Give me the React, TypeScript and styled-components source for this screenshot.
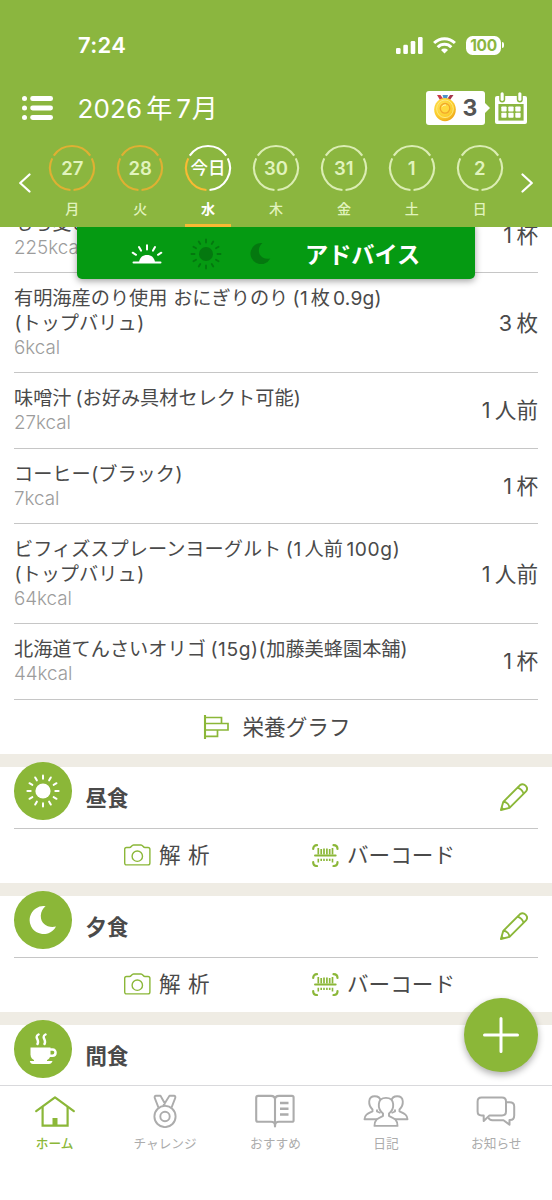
import React from 'react';
import styled, { createGlobalStyle } from 'styled-components';

const LEAF = '#8bb63f';
const ACCENT = '#8bb738';
const TEXT = '#4a4a4a';
const AMBER = '#f9ba33';

const Global = createGlobalStyle`
  *, *::before, *::after { box-sizing: border-box; }
  body {
    margin: 0;
    background: #fff;
    font-family: Inter, "Noto Sans CJK JP", sans-serif;
    color: ${TEXT};
  }
  svg { display: block; flex: none; }
`;

const Screen = styled.div`
  position: relative;
  display: flex;
  flex-direction: column;
  width: 552px;
  height: 1200px;
  overflow: hidden;
  background: #fff;
`;

/* ---------- header ---------- */

const Header = styled.header`
  flex: none;
  height: 227px;
  background: ${LEAF};
  color: #fff;
  z-index: 2;
`;

const StatusBar = styled.div`
  display: flex;
  align-items: center;
  height: 90px;
  padding: 0 51px 0 78px;
`;

const Clock = styled.div`
  flex: 1;
  font-size: 22px;
  font-weight: 600;
  letter-spacing: 0.3px;
  line-height: 28px;
`;

const StatusIcons = styled.div`
  display: flex;
  align-items: center;
  gap: 10px;
`;

const Battery = styled.div`
  position: relative;
  width: 35px;
  height: 19px;
  border-radius: 6.5px;
  background: #fff;
  color: ${LEAF};
  font-size: 15.5px;
  font-weight: 700;
  letter-spacing: -0.3px;
  line-height: 19px;
  text-align: center;

  &::after {
    content: '';
    position: absolute;
    right: -3px;
    top: 6.5px;
    width: 2px;
    height: 6px;
    border-radius: 0 2px 2px 0;
    background: #fff;
  }
`;

const TitleBar = styled.div`
  display: flex;
  align-items: center;
  height: 36px;
  padding: 0 25px 0 22px;
`;

const Month = styled.h1`
  display: flex;
  flex: 1;
  margin: 1px 0 0 24.5px;
  font-size: 26px;
  font-weight: 400;
  line-height: 36px;
`;

const Badge = styled.div`
  position: relative;
  display: flex;
  align-items: center;
  justify-content: center;
  gap: 7px;
  width: 59px;
  height: 34px;
  margin-right: 10px;
  border-radius: 3px;
  background: #fff;
  color: #555;
  font-size: 23px;
  font-weight: 700;

  &::after {
    content: '';
    position: absolute;
    left: 100%;
    top: 12px;
    border: 5px solid transparent;
    border-left-color: #fff;
    border-right: 0;
  }
`;

const Week = styled.div`
  display: flex;
  height: 101px;
  padding: 18px 15px 0;
`;

const Arrow = styled.div`
  width: 20px;
  padding-top: 28.5px;
  display: flex;
  justify-content: center;
`;

const Days = styled.div`
  display: grid;
  grid-template-columns: repeat(7, 67.9px);
  flex: 1;
  justify-content: center;
`;

const DayCell = styled.div<{ $today?: boolean }>`
  display: flex;
  flex-direction: column;
  align-items: center;
  height: 83px;
  color: ${p => (p.$today ? '#fff' : '#e1f3bd')};
  font-weight: ${p => (p.$today ? 700 : 500)};

  &::after {
    content: '';
    width: 46px;
    height: 3px;
    margin-top: 5px;
    background: ${p => (p.$today ? AMBER : 'transparent')};
  }
`;

const Ring = styled.div`
  display: grid;
  width: 48px;
  height: 48px;

  > * { grid-area: 1 / 1; }
`;

const DayNumber = styled.span<{ $today?: boolean }>`
  align-self: center;
  justify-self: center;
  font-size: ${p => (p.$today ? 17.5 : 18.5)}px;
  font-weight: ${p => (p.$today ? 500 : 600)};
  line-height: 26px;
`;

const DayName = styled.span`
  margin-top: 6px;
  font-size: 14px;
  line-height: 21px;
`;

/* ---------- meal list ---------- */

const Content = styled.main`
  flex: 1;
  min-height: 0;
  overflow: hidden;
`;

const FoodList = styled.ul`
  list-style: none;
  margin: -29.4px 14px 0;
  padding: 0;
`;

const FoodRow = styled.li`
  display: flex;
  align-items: center;
  justify-content: space-between;
  padding: 13px 0;
  border-bottom: 1px solid #c6c6c6;
`;

const FoodName = styled.div`
  display: flex;
  font-size: 19.2px;
  line-height: 25px;
  height: 24.3px;
  white-space: pre;
`;

const Calories = styled.div`
  font-size: 18.8px;
  font-weight: 300;
  line-height: 26px;
  height: 24.3px;
  color: #9c9c9c;
`;

const Quantity = styled.div`
  display: flex;
  font-size: 21.6px;
  line-height: 30px;
`;

const Run = styled.span<{ $gap?: number; $track?: number }>`
  margin-left: ${p => p.$gap ?? 0}px;
  letter-spacing: ${p => p.$track ?? 0}px;
`;

const GraphLink = styled.div`
  display: flex;
  align-items: center;
  justify-content: center;
  gap: 13px;
  height: 53.9px;
  padding-left: 1px;
  font-size: 21.6px;
  line-height: 30px;
`;

const Meal = styled.section`
  border-top: 13.4px solid #efece4;
  height: 129px;
`;

const MealHead = styled.div`
  display: flex;
  height: 62px;
  margin: 0 14px;
  border-bottom: 1px solid #c6c6c6;
`;

const MealIcon = styled.div`
  display: flex;
  align-items: center;
  justify-content: center;
  width: 57.5px;
  height: 57.5px;
  margin-top: -4.5px;
  border-radius: 50%;
  background: ${ACCENT};
`;

const MealTitle = styled.h2`
  flex: 1;
  margin: 16px 0 0 14px;
  font-size: 21.4px;
  font-weight: 700;
  line-height: 30px;
`;

const Pencil = styled.div`
  padding: 16.5px 10.5px 0 0;
`;

const MealActions = styled.div`
  display: flex;
  height: 53.6px;
  padding-left: 124px;
  align-items: center;
`;

const Action = styled.div<{ $width?: number; $spaced?: boolean }>`
  display: flex;
  align-items: center;
  gap: 8px;
  width: ${p => (p.$width ? `${p.$width}px` : 'auto')};
  font-size: 21.6px;
  line-height: 30px;
  word-spacing: ${p => (p.$spaced ? '1.3px' : '0')};
`;

/* ---------- overlays ---------- */

const Advice = styled.div`
  position: absolute;
  z-index: 1;
  top: 222px;
  left: 77px;
  display: flex;
  align-items: center;
  width: 398px;
  height: 57px;
  padding: 6px 0 0 54px;
  border-radius: 5px;
  background: #059a12;
  box-shadow: 0 2px 7px rgba(0, 0, 0, 0.38);
  color: #fff;
`;

const AdviceText = styled.span`
  margin: 2px 0 0 34px;
  font-size: 23.2px;
  font-weight: 700;
  line-height: 32px;
`;

const AdviceIcon = styled.span<{ $gap?: number }>`
  margin-left: ${p => p.$gap ?? 0}px;
`;

const AddButton = styled.button`
  position: absolute;
  z-index: 1;
  left: 464px;
  top: 998px;
  display: flex;
  align-items: center;
  justify-content: center;
  width: 74px;
  height: 74px;
  padding: 0;
  border: 0;
  border-radius: 50%;
  background: ${ACCENT};
  box-shadow: 0 3px 7px rgba(0, 0, 0, 0.32);
`;

/* ---------- tab bar ---------- */

const TabBar = styled.nav`
  display: grid;
  grid-template-columns: repeat(5, 1fr);
  flex: none;
  height: 115px;
  border-top: 1px solid #d9d9dc;
  background: #fff;
`;

const Tab = styled.div<{ $active?: boolean }>`
  display: flex;
  flex-direction: column;
  align-items: center;
  padding-top: 8px;
  padding-right: 1px;
  color: ${p => (p.$active ? ACCENT : '#acacac')};
  font-size: 12.7px;
  font-weight: ${p => (p.$active ? 500 : 400)};
  line-height: 18px;

  svg { margin-bottom: 6.5px; }
`;

/* ---------- drawings ---------- */

const polar = (r: number, deg: number, c: number) => {
  const a = (deg * Math.PI) / 180;
  return `${(c + r * Math.cos(a)).toFixed(2)} ${(c + r * Math.sin(a)).toFixed(2)}`;
};

const Arcs = ({ colors }: { colors: string[] }) => (
  <svg width="48" height="48" viewBox="0 0 48 48" fill="none" strokeWidth="2.1">
    {colors.map((color, i) => {
      const start = 210 + i * 120 + 4;
      return (
        <path key={i} stroke={color} d={`M${polar(22, start, 24)}A22 22 0 0 1 ${polar(22, start + 112, 24)}`} />
      );
    })}
  </svg>
);

const Sun = ({ size, color, core, inner, outer, width }: {
  size: number; color: string; core: number; inner: number; outer: number; width: number;
}) => {
  const c = size / 2;
  return (
    <svg width={size} height={size} stroke={color} strokeWidth={width} strokeLinecap="round">
      <circle cx={c} cy={c} r={core} fill={color} stroke="none" />
      {Array.from({ length: 12 }, (_, i) => (
        <path key={i} d={`M${polar(inner, i * 30, c)}L${polar(outer, i * 30, c)}`} />
      ))}
    </svg>
  );
};

const Moon = ({ size, color }: { size: number; color: string }) => (
  <svg width={size} height={size} viewBox="0 0 28 28" fill={color}>
    <path d="M16.6 .2A14 14 0 1 0 27 20.6C19 22.5 11.5 18 11.8 9.5C12 5.5 13.8 2.4 16.6 .2Z" />
  </svg>
);

const Sunrise = () => (
  <svg width="32" height="20" viewBox="0 0 32 20" fill="none" stroke="#fff" strokeWidth="2" strokeLinecap="round">
    <path d="M2.5 18.4H29.5" />
    <path d="M8 18.2C8.5 13.6 11.8 11 16 11S23.5 13.6 24 18.2Z" fill="#fff" stroke="none" />
    <path d="M16 1.3V5.4M8 3L10 6.6M24 3L22 6.6M1.7 8.7L5 10.8M30.3 8.7L27 10.8" />
  </svg>
);

const Cup = () => (
  <svg width="30" height="32" viewBox="0 0 30 32" fill="none">
    <path d="M2.5 14.5H22.5V21.5C22.5 24.5 20.5 27 17.5 27.5H7.500C4.500 27 2.500 24.500 2.500 21.500Z" fill="#fff" />
    <path d="M22 16.500H24.500C28.800 16.500 28.300 22.800 24.500 22.800H21.500" stroke="#fff" strokeWidth="2.500" />
    <path d="M6 25H19V29H6Z" fill="#fff" />
    <path d="M1.800 28H24.500C24 30 22.500 31 21 31H5C3.500 31 2.100 30 1.800 28Z" fill="#fff" />
    <path d="M10.500 1.500C5.500 4 12 7 9.500 11M17.500 1.500C12.500 4 19 7 16.500 11" stroke="#fff" strokeWidth="2.500" strokeLinecap="round" />
  </svg>
);

const MenuIcon = () => (
  <svg width="31" height="24" viewBox="0 0 31 24" fill="#fff">
    {[2.6, 12, 21.4].map(y => (
      <React.Fragment key={y}>
        <circle cx="2.5" cy={y} r="2.5" />
        <rect x="8.2" y={y - 2.5} width="22.8" height="5" rx="2.4" />
      </React.Fragment>
    ))}
  </svg>
);

const Signal = () => (
  <svg width="27" height="17" viewBox="0 0 27 17" fill="#fff">
    <rect x="0" y="11" width="4.6" height="6" rx="1.3" />
    <rect x="7.3" y="7.8" width="4.6" height="9.2" rx="1.3" />
    <rect x="14.7" y="4" width="4.6" height="13" rx="1.3" />
    <rect x="22" y="0" width="4.6" height="17" rx="1.3" />
  </svg>
);

const Wifi = () => (
  <svg width="23" height="17" viewBox="0 0 23 17" fill="none" stroke="#fff" strokeWidth="3">
    <path d="M1.100 6A14.800 14.800 0 0 1 21.900 6" />
    <path d="M4.700 10.200A9.400 9.400 0 0 1 18.300 10.200" />
    <path d="M8 13A5 5 0 0 1 15 13L11.500 16.600Z" fill="#fff" stroke="none" />
  </svg>
);

const Medal = () => (
  <svg width="22" height="28" viewBox="0 0 22 28">
    <defs>
      <radialGradient id="gold" cx=".4" cy=".35" r=".7">
        <stop offset="0" stopColor="#ffe45a" />
        <stop offset=".65" stopColor="#fccf2e" />
        <stop offset="1" stopColor="#eda116" />
      </radialGradient>
    </defs>
    <path d="M3 1H6.5L10 6H6Z" fill="#c93b4a" />
    <path d="M8.5 1H14L12.5 6H10Z" fill="#4a93c8" />
    <path d="M16 1H19.5L16 6H12.5Z" fill="#a5344c" />
    <ellipse cx="11" cy="15.6" rx="10.8" ry="11.6" fill="url(#gold)" />
    <ellipse cx="11" cy="14.8" rx="8.3" ry="8.8" fill="none" stroke="#ffe980" strokeWidth="1" />
    <circle cx="11" cy="14.3" r="4.8" fill="#ffda3f" stroke="#f1a72a" strokeWidth="1.3" />
    <path d="M8.3 12.5A4 4 0 0 1 12 11" stroke="#fff7b8" strokeWidth="1" fill="none" />
  </svg>
);

const Calendar = () => (
  <svg width="32" height="32" viewBox="0 0 32 32">
    <rect x="0" y="4" width="32" height="28" rx="2" fill="#fff" />
    <rect x="3.4" y="12" width="25.2" height="16.6" fill={LEAF} />
    {[14.5, 20.8].map(y => [6.3, 13.3, 20.3].map(x => (
      <rect key={`${x}-${y}`} x={x} y={y} width="5.3" height="5" rx=".8" fill="#fff" />
    )))}
    <rect x="4.2" y="-1" width="6" height="11.5" rx="3" fill={LEAF} />
    <rect x="5.6" y=".3" width="3.1" height="8.6" rx="1.55" fill="#fff" />
    <rect x="21.8" y="-1" width="6" height="11.5" rx="3" fill={LEAF} />
    <rect x="23.3" y=".3" width="3.1" height="8.6" rx="1.55" fill="#fff" />
  </svg>
);

const Chevron = ({ flip }: { flip?: boolean }) => (
  <svg width="12" height="20" viewBox="0 0 12 20" fill="none" stroke="#fff" strokeWidth="2.2" strokeLinecap="round" strokeLinejoin="round">
    <path d={flip ? 'M1.5 1.5L10.8 10L1.5 18.5' : 'M10.5 1.5L1.2 10L10.5 18.5'} />
  </svg>
);

const GraphIcon = () => (
  <svg width="27" height="26" viewBox="0 0 27 26" fill="none" stroke={ACCENT} strokeWidth="1.7">
    <path d="M2 1V25" strokeWidth="2.1" />
    <path d="M2 3.5H18.5V9.5H2M18.500 9.500H25V16H2M14.500 16V22.300H2" />
  </svg>
);

const Camera = () => (
  <svg width="27" height="22" viewBox="0 0 27 22" fill="none" stroke={ACCENT} strokeWidth="1.4">
    <path d="M2.5 3.500H5.500C7.500 3.500 7.500 1 9.500 1H17C19 1 19 3.500 21 3.500H24C25.200 3.500 25.900 4.200 25.900 5.300V19C25.900 20.200 25.200 20.900 24 20.900H2.600C1.400 20.900 .7 20.200 .7 19V5.300C.7 4.200 1.400 3.500 2.500 3.500Z" />
    <circle cx="13.300" cy="12.200" r="5.200" />
  </svg>
);

const Barcode = () => (
  <svg width="27" height="23" viewBox="0 0 27 23" fill="none" stroke={ACCENT} strokeWidth="2.200" strokeLinecap="round">
    <path d="M1.200 5C1.200 2.500 2.500 1.200 5 1.200M21.500 1.200C24 1.200 25.500 2.500 25.500 5M1.200 18.200C1.200 20.700 2.500 22 5 22M21.500 22C24 22 25.500 20.700 25.500 18.200" />
    <path d="M3 11.500H23.700" strokeWidth="1.900" />
    <path d="M6.300 4V10.500M9.200 5V10.500M12 4.500V10.500M14.900 4.500V10.500M17.700 5V10.500M20.500 4V10.500" strokeWidth="1.700" strokeLinecap="butt" />
    <path d="M6.300 14.800V18.500M9.200 14.800V17M12 14.800V17M14.900 14.800V17M17.700 14.800V17M20.500 14.800V18.500" strokeWidth="1.600" strokeLinecap="butt" />
  </svg>
);

const PencilIcon = () => (
  <svg width="28" height="28" viewBox="0 0 28 28" fill="none" stroke={ACCENT} strokeWidth="1.9" strokeLinejoin="round">
    <path d="M.9 27L3.3 18.8L19.8 2.3C23.8 -1 29.2 4.5 26 8.3L9.5 24.8Z" />
    <path d="M17.3 4.8C20 5 23.3 8.2 23.5 10.8M3.3 18.8C6.5 19 9.2 21.5 9.5 24.8" />
    <path d="M.9 27L2 23.7L4.3 26Z" fill={ACCENT} stroke="none" />
  </svg>
);

const Home = () => (
  <svg width="40" height="34" viewBox="0 0 40 34" fill="none" stroke={ACCENT} strokeWidth="2.2">
    <path d="M1.200 17.200L20 3.300L38.800 17.200" strokeLinecap="round" strokeLinejoin="round" />
    <path d="M7.600 13V31.700H32.600V13" />
    <rect x="17.500" y="24" width="5" height="8" fill={ACCENT} stroke="none" />
  </svg>
);

const Challenge = () => (
  <svg width="30" height="34" viewBox="0 0 30 34" fill="none" stroke="#acacac" strokeWidth="1.9" strokeLinejoin="round">
    <circle cx="15" cy="22.5" r="10.600" />
    <circle cx="15" cy="22.5" r="4.700" />
    <path d="M8.500 13.700L4.800 4.200C4.300 2.800 4.800 1.800 6 1.800H10.500L15.400 10.500M21.500 13.700L25.200 4.200C25.700 2.800 25.200 1.800 24 1.800H19.500L13.200 11.700" />
  </svg>
);

const Book = () => (
  <svg width="40" height="34" viewBox="0 0 40 34" fill="none" stroke="#acacac" strokeWidth="2.100" strokeLinejoin="round">
    <path d="M20 32.500C20 29 19 27.800 16 27.800H3C1.800 27.800 1.200 27 1.200 26V4C1.200 2.600 2 1.900 3.200 1.900H16C18.500 1.900 20 3.300 20 5.500Z" />
    <path d="M20 32.500C20 29 21 27.800 24 27.800H37C38.100 27.800 38.600 27.200 38.600 26.200V3.500C38.600 2.500 38.100 1.900 37 1.900H24C21.500 1.900 20 3.300 20 5.500" />
    <path d="M25 9H33.500M25 14.800H33.500M25 20.500H33.500" strokeWidth="2.400" />
  </svg>
);

const People = () => (
  <svg width="46" height="34" viewBox="0 0 46 34" fill="none" stroke="#acacac" strokeWidth="1.900" strokeLinejoin="round">
    <path d="M15.500 25.300H1.500C1.700 20.500 5 19.500 9.500 17.500V15.500C5 11 4.500 2.300 11.800 2.300C15 2.300 17.200 4.300 17.600 6.800M30.500 25.300H44.500C44.300 20.500 41 19.500 36.500 17.500V15.500C41 11 41.500 2.300 34.200 2.300C31 2.300 28.800 4.300 28.400 6.800" />
    <path d="M14 15.500V17.500L17.500 19M32 15.500V17.500L28.500 19" />
    <path d="M11.500 31.900C11.600 25.500 14.500 24.500 20 22V19.500C14.200 15 13.700 3.900 23 3.900S31.800 15 26 19.500V22C31.500 24.500 34.400 25.500 34.500 31.900Z" fill="#fff" />
  </svg>
);

const Chat = () => (
  <svg width="40" height="34" viewBox="0 0 40 34" fill="none" stroke="#acacac" strokeWidth="2" strokeLinejoin="round">
    <path d="M5.500 3.500H26C28.500 3.500 30 4.900 30 7.400V17.500C30 20 28.500 21.400 26 21.400H13.500L7.700 27V21.400H5.500C3 21.400 1.600 20 1.600 17.500V7.400C1.600 4.900 3 3.500 5.500 3.500Z" />
    <path d="M30 8.200H33.500C36.500 8.200 38.200 9.700 38.200 12.200V21.500C38.200 24.500 36.500 26 34 26H33.500V30.700L27.500 26.200H16.500C14.500 26.200 13 25.300 12.500 23.500" />
  </svg>
);

/* ---------- data ---------- */

type Piece = [text: string, gap?: number, track?: number];

const foods: { lines: Piece[][]; kcal: string; amount: string; unit: string }[] = [
  { lines: [[['もち麦ごはん']]], kcal: '225kcal', amount: '1', unit: '杯' },
  {
    lines: [
      [['有明海産のり使用'], ['おにぎりのり', 5.7], ['(1', 4.3, 0.5], ['枚', 2.3], ['0.9g)', 3, 0.25]],
      [['(', 0.5], ['トップバリュ'], [')', 0.5]],
    ],
    kcal: '6kcal', amount: '3', unit: '枚',
  },
  { lines: [[['味噌汁'], ['(', 4], ['お好み具材セレクト可能'], [')']]], kcal: '27kcal', amount: '1', unit: '人前' },
  { lines: [[['コーヒー'], ['(', 0.5], ['ブラック'], [')', 0.5]]], kcal: '7kcal', amount: '1', unit: '杯' },
  {
    lines: [
      [['ビフィズスプレーンヨーグルト'], ['(1', 4.5, 0.6], ['人前', 2.8], ['100g)', 3.5, 0.6]],
      [['(', 0.5], ['トップバリュ'], [')', 0.5]],
    ],
    kcal: '64kcal', amount: '1', unit: '人前',
  },
  { lines: [[['北海道てんさいオリゴ'], ['(15g)(', 4.5, 0.6], ['加藤美蜂園本舗'], [')']]], kcal: '44kcal', amount: '1', unit: '杯' },
];

const GOLD = '#dfb033';
const PALE = '#dbedb3';
const days = [
  { num: '27', name: '月', arcs: [GOLD, GOLD, GOLD] },
  { num: '28', name: '火', arcs: [GOLD, GOLD, GOLD] },
  { num: '今日', name: '水', arcs: ['#fff', '#fff', AMBER], today: true },
  { num: '30', name: '木', arcs: [PALE, PALE, PALE] },
  { num: '31', name: '金', arcs: [PALE, PALE, PALE] },
  { num: '1', name: '土', arcs: [PALE, PALE, PALE] },
  { num: '2', name: '日', arcs: [PALE, PALE, PALE] },
];

const meals = [
  { title: '昼食', icon: <Sun size={34} color="#fff" core={7.6} inner={12.3} outer={15.6} width={2} />, full: true },
  { title: '夕食', icon: <Moon size={28} color="#fff" />, full: true },
  { title: '間食', icon: <Cup />, full: false },
];

const tabs = [
  { label: 'ホーム', icon: <Home />, active: true },
  { label: 'チャレンジ', icon: <Challenge /> },
  { label: 'おすすめ', icon: <Book /> },
  { label: '日記', icon: <People /> },
  { label: 'お知らせ', icon: <Chat /> },
];

export default function App() {
  return (
    <Screen>
      <Global />
      <Header>
        <StatusBar>
          <Clock>7:24</Clock>
          <StatusIcons>
            <Signal />
            <Wifi />
            <Battery>100</Battery>
          </StatusIcons>
        </StatusBar>
        <TitleBar>
          <MenuIcon />
          <Month>
            <Run $track={0.1}>2026</Run>
            <Run $gap={4}>年</Run>
            <Run $gap={4} $track={0.8}>7</Run>
            <Run>月</Run>
          </Month>
          <Badge><Medal />3</Badge>
          <Calendar />
        </TitleBar>
        <Week>
          <Arrow><Chevron /></Arrow>
          <Days>
            {days.map(d => (
              <DayCell key={d.num} $today={d.today}>
                <Ring>
                  <Arcs colors={d.arcs} />
                  <DayNumber $today={d.today}>{d.num}</DayNumber>
                </Ring>
                <DayName>{d.name}</DayName>
              </DayCell>
            ))}
          </Days>
          <Arrow><Chevron flip /></Arrow>
        </Week>
      </Header>

      <Advice>
        <Sunrise />
        <AdviceIcon $gap={27}><Sun size={32} color="#04780f" core={7} inner={11.5} outer={14.5} width={1.8} /></AdviceIcon>
        <AdviceIcon $gap={28}><Moon size={21} color="#04780f" /></AdviceIcon>
        <AdviceText>アドバイス</AdviceText>
      </Advice>

      <Content>
        <FoodList>
          {foods.map(f => (
            <FoodRow key={f.kcal}>
              <div>
                {f.lines.map((line, i) => (
                  <FoodName key={i}>
                    {line.map(([text, gap, track], j) => (
                      <Run key={j} $gap={gap} $track={track}>{text}</Run>
                    ))}
                  </FoodName>
                ))}
                <Calories>{f.kcal}</Calories>
              </div>
              <Quantity>
                <Run>{f.amount}</Run>
                <Run $gap={4.3}>{f.unit}</Run>
              </Quantity>
            </FoodRow>
          ))}
        </FoodList>
        <GraphLink><GraphIcon />栄養グラフ</GraphLink>
        {meals.map(m => (
          <Meal key={m.title}>
            <MealHead>
              <MealIcon>{m.icon}</MealIcon>
              <MealTitle>{m.title}</MealTitle>
              {m.full && <Pencil><PencilIcon /></Pencil>}
            </MealHead>
            {m.full && (
              <MealActions>
                <Action $width={188} $spaced><Camera />解 析</Action>
                <Action><Barcode />バーコード</Action>
              </MealActions>
            )}
          </Meal>
        ))}
      </Content>

      <AddButton aria-label="追加">
        <svg width="36" height="36" viewBox="0 0 36 36" stroke="#fff" strokeWidth="3" strokeLinecap="round">
          <path d="M18 1.5V34.5M1.5 18H34.5" />
        </svg>
      </AddButton>

      <TabBar>
        {tabs.map(t => (
          <Tab key={t.label} $active={t.active}>
            {t.icon}
            {t.label}
          </Tab>
        ))}
      </TabBar>
    </Screen>
  );
}
